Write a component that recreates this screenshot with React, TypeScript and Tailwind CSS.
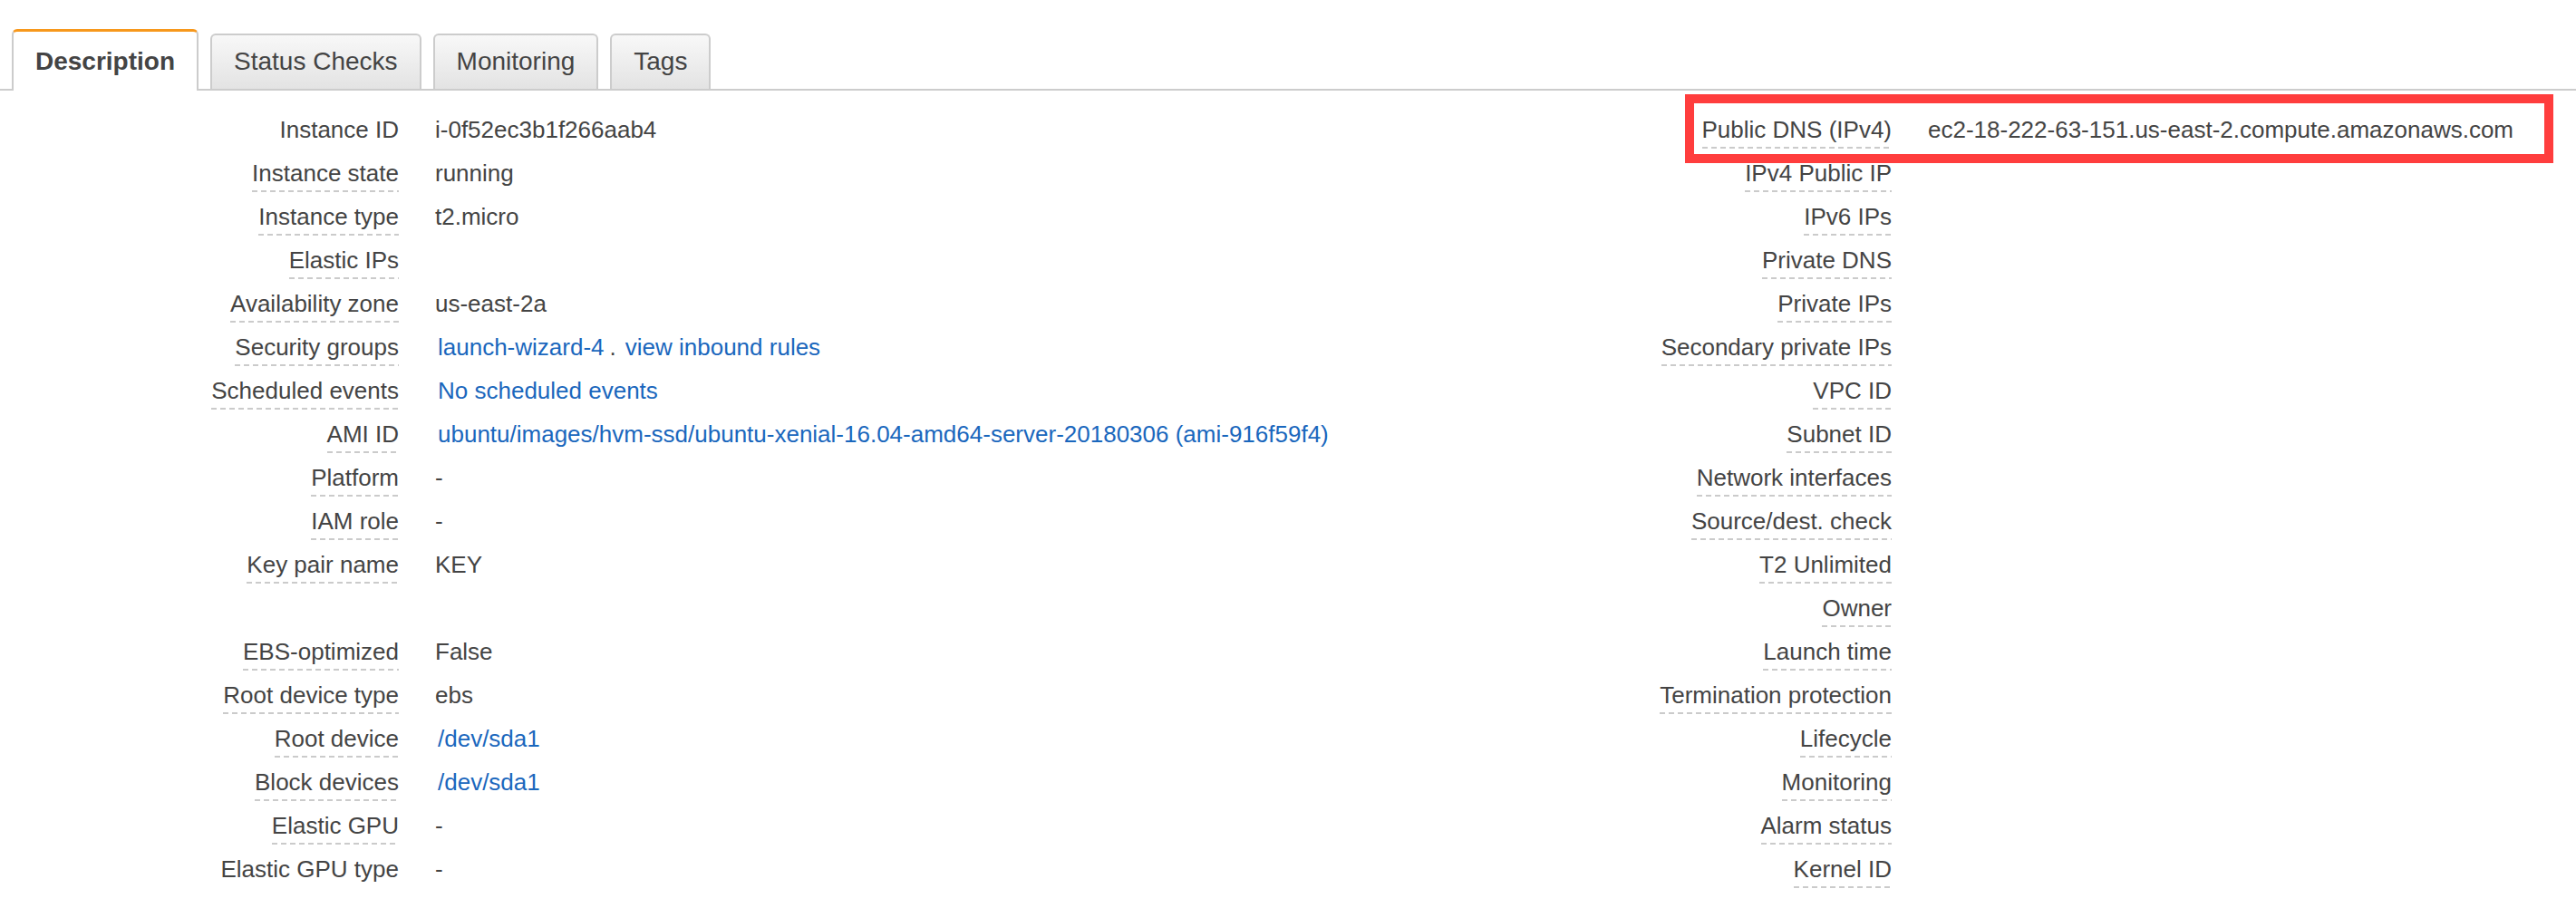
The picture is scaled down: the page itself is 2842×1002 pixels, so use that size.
import type { ReactNode } from "react";

type Field = { label: string; value?: ReactNode; plain?: boolean };

const linkCls = "text-[#1a67bd] cursor-pointer hover:underline";

const leftFields: (Field | null)[] = [
  { label: "Instance ID", value: "i-0f52ec3b1f266aab4", plain: true },
  { label: "Instance state", value: "running" },
  { label: "Instance type", value: "t2.micro" },
  { label: "Elastic IPs" },
  { label: "Availability zone", value: "us-east-2a" },
  {
    label: "Security groups",
    value: (
      <>
        <a className={`${linkCls} pl-[3px]`}>launch-wizard-4</a>
        <span className="ml-[6px] mr-[10px]">.</span>
        <a className={linkCls}>view inbound rules</a>
      </>
    ),
  },
  {
    label: "Scheduled events",
    value: <a className={`${linkCls} pl-[3px]`}>No scheduled events</a>,
  },
  {
    label: "AMI ID",
    value: (
      <a className={`${linkCls} pl-[3px]`}>
        ubuntu/images/hvm-ssd/ubuntu-xenial-16.04-amd64-server-20180306 (ami-916f59f4)
      </a>
    ),
  },
  { label: "Platform", value: "-" },
  { label: "IAM role", value: "-" },
  { label: "Key pair name", value: "KEY" },
  null,
  { label: "EBS-optimized", value: "False" },
  { label: "Root device type", value: "ebs" },
  { label: "Root device", value: <a className={`${linkCls} pl-[3px]`}>/dev/sda1</a> },
  { label: "Block devices", value: <a className={`${linkCls} pl-[3px]`}>/dev/sda1</a> },
  { label: "Elastic GPU", value: "-" },
  { label: "Elastic GPU type", value: "-", plain: true },
];

const rightFields: Field[] = [
  { label: "Public DNS (IPv4)", value: "ec2-18-222-63-151.us-east-2.compute.amazonaws.com" },
  { label: "IPv4 Public IP" },
  { label: "IPv6 IPs" },
  { label: "Private DNS" },
  { label: "Private IPs" },
  { label: "Secondary private IPs" },
  { label: "VPC ID" },
  { label: "Subnet ID" },
  { label: "Network interfaces" },
  { label: "Source/dest. check" },
  { label: "T2 Unlimited" },
  { label: "Owner" },
  { label: "Launch time" },
  { label: "Termination protection" },
  { label: "Lifecycle" },
  { label: "Monitoring" },
  { label: "Alarm status" },
  { label: "Kernel ID" },
];

const tabs = ["Description", "Status Checks", "Monitoring", "Tags"];

function Row({ field, labelWidth }: { field: Field | null; labelWidth: string }) {
  if (!field) return <div className="h-[48px]" />;
  return (
    <div className="flex h-[48px] items-start">
      <div className={`${labelWidth} flex shrink-0 justify-end`}>
        <span
          className={`inline-block leading-[30px] pb-[6px] ${
            field.plain
              ? ""
              : "bg-[linear-gradient(to_right,#cbcbcb_6px,transparent_6px)] bg-[length:10px_2px] bg-[position:0_100%] bg-repeat-x"
          }`}
        >
          {field.label}
        </span>
      </div>
      <div className="ml-[40px] leading-[30px] whitespace-nowrap">{field.value}</div>
    </div>
  );
}

export default function App() {
  return (
    <div className="relative min-h-[1002px] w-[2842px] bg-white pt-[32px] font-['Liberation_Sans',Arial,sans-serif] text-[#444444]">
      {/* Tab strip */}
      <div className="flex items-end gap-[13px] border-b-2 border-[#cccccc] pl-[13px]">
        {tabs.map((t, i) =>
          i === 0 ? (
            <div
              key={t}
              className="-mb-[2px] rounded-t-[6px] border-x-2 border-t-[3px] border-x-[#cccccc] border-t-[#f7981c] bg-white px-[24px] pt-[17px] pb-[16px] text-[28px] font-bold leading-[32px]"
            >
              {t}
            </div>
          ) : (
            <div
              key={t}
              className="rounded-t-[6px] border-x-2 border-t-2 border-[#cccccc] bg-gradient-to-b from-[#f8f8f8] to-[#e3e3e3] px-[24px] pt-[13px] pb-[14px] text-[28px] leading-[32px]"
            >
              {t}
            </div>
          )
        )}
      </div>

      {/* Description body */}
      <div className="flex pt-[28px] text-[26px]">
        <div className="w-[1640px] shrink-0">
          {leftFields.map((f, i) => (
            <Row key={i} field={f} labelWidth="w-[440px]" />
          ))}
        </div>
        <div className="flex-1">
          {rightFields.map((f) => (
            <Row key={f.label} field={f} labelWidth="w-[447px]" />
          ))}
        </div>
      </div>

      {/* red highlight annotation */}
      <div className="pointer-events-none absolute left-[1859px] top-[104px] h-[76px] w-[958px] border-[10px] border-[#ff3d3d]" />
    </div>
  );
}
